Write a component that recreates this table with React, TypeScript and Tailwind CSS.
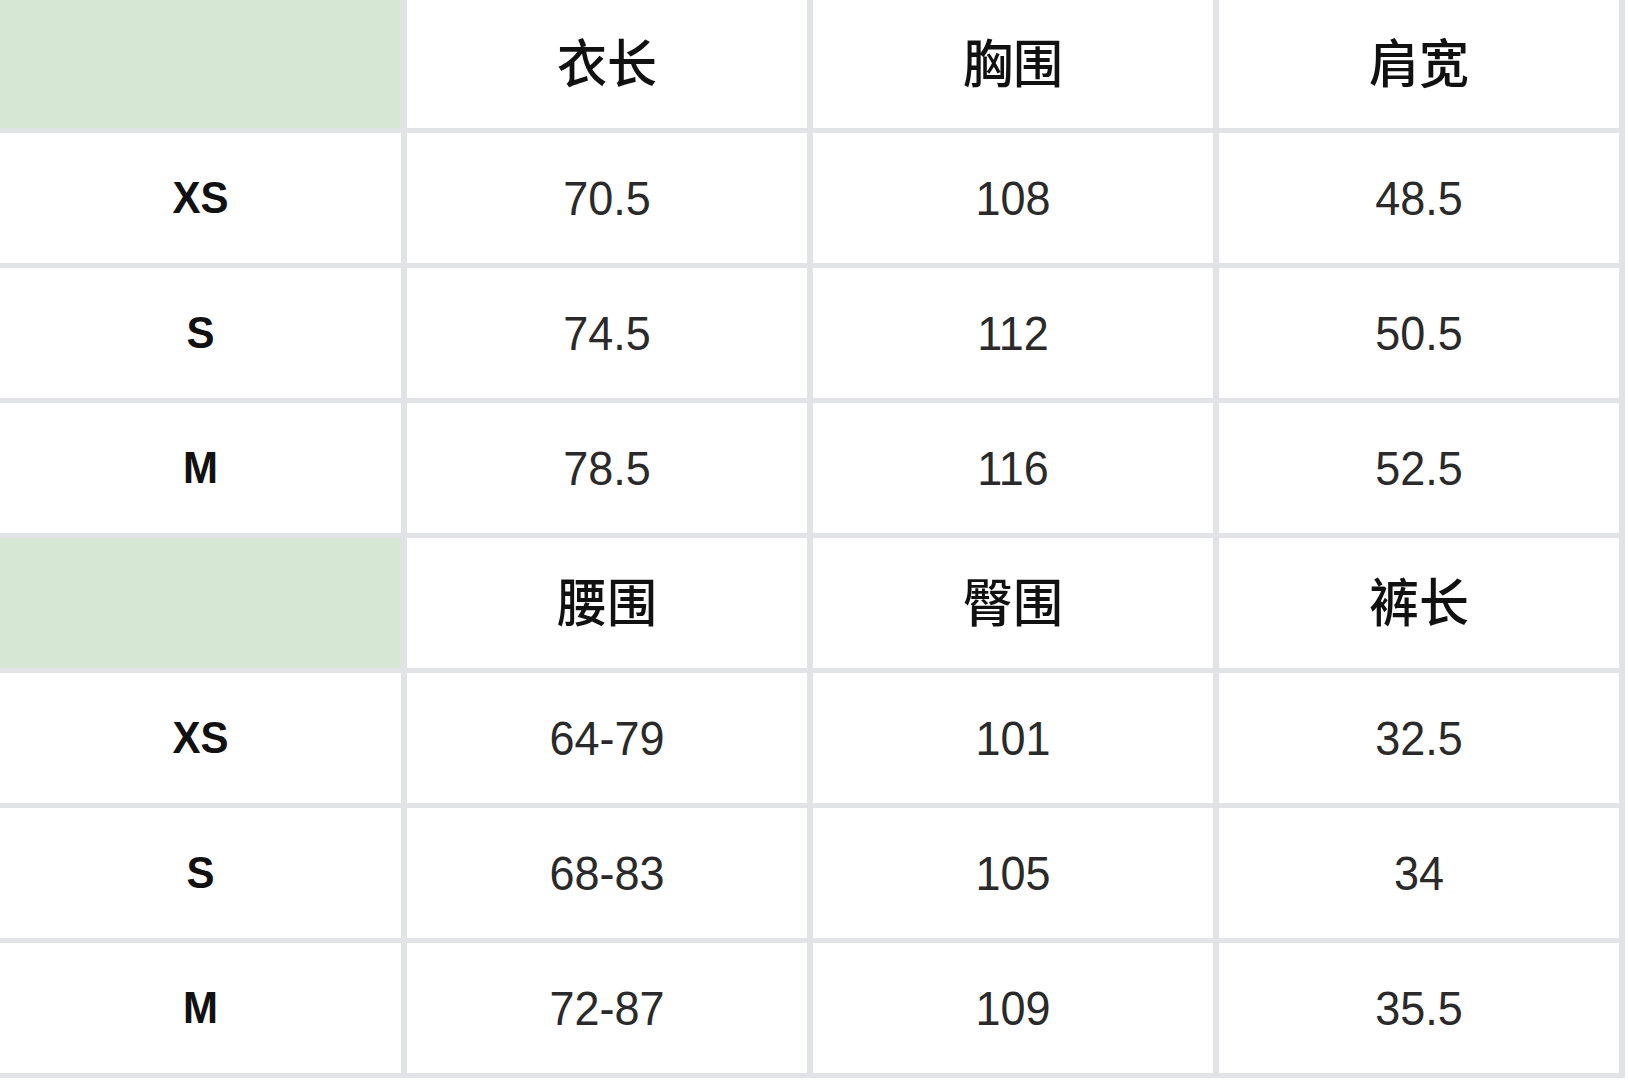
const sizes = ['XS', 'S', 'M']

const tables = [
  {
    headers: ['衣长', '胸围', '肩宽'],
    rows: [
      ['70.5', '108', '48.5'],
      ['74.5', '112', '50.5'],
      ['78.5', '116', '52.5'],
    ],
  },
  {
    headers: ['腰围', '臀围', '裤长'],
    rows: [
      ['64-79', '101', '32.5'],
      ['68-83', '105', '34'],
      ['72-87', '109', '35.5'],
    ],
  },
]

const cjk = "font-['Noto_Sans_CJK_SC','Noto_Sans',sans-serif]"
const latin = "font-['Liberation_Sans',Arial,sans-serif]"

function HeaderRow({ headers }: { headers: string[] }) {
  return (
    <>
      <div className="bg-[#d6e8d3]" />
      {headers.map((h) => (
        <div key={h} className="bg-white flex items-center justify-center">
          <span className={`${cjk} text-[50px] font-medium text-[#111] leading-none scale-y-[1.04] -translate-y-[4px]`}>{h}</span>
        </div>
      ))}
    </>
  )
}

function DataRow({ size, values }: { size: string; values: string[] }) {
  return (
    <>
      <div className="bg-white flex items-center justify-center">
        <span className={`${latin} text-[42px] font-bold text-[#111] leading-none scale-y-[1.07]`}>{size}</span>
      </div>
      {values.map((v, i) => (
        <div key={i} className="bg-white flex items-center justify-center">
          <span className={`${latin} text-[45px] text-[#2a2a2a] leading-none scale-y-[1.08]`}>{v}</span>
        </div>
      ))}
    </>
  )
}

export default function App() {
  return (
    <div className="w-[1628px] h-[1080px] bg-white overflow-hidden">
      <div className="w-[1625px] bg-[#e2e3e7] pr-[6px] pb-[5px] grid grid-cols-[401px_400px_400px_400px] grid-rows-[128px_repeat(7,130px)] gap-x-[6px] gap-y-[5px]">
        {tables.map((t, ti) => (
          <div key={ti} className="contents">
            <HeaderRow headers={t.headers} />
            {t.rows.map((r, ri) => (
              <DataRow key={ri} size={sizes[ri]} values={r} />
            ))}
          </div>
        ))}
      </div>
    </div>
  )
}
